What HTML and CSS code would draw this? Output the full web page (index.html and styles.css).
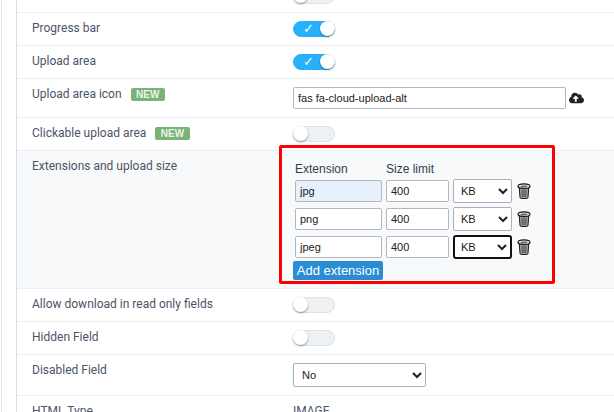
FILE: index.html
```html
<!DOCTYPE html>
<html>
  <head>
    <title>Field settings</title>
    <link rel="stylesheet" href="styles.css">
  </head>
  <body>
    <div class="page">
      <div class="rows">
        <div class="row">
          <div class="label"></div>
          <div class="toggle"></div>
        </div>
        <div class="row">
          <div class="label">Progress bar</div>
          <div class="toggle on"><span class="check">&#10003;</span></div>
        </div>
        <div class="row">
          <div class="label">Upload area</div>
          <div class="toggle on"><span class="check">&#10003;</span></div>
        </div>
        <div class="row">
          <div class="label">Upload area icon <span class="badge">NEW</span></div>
          <div class="icon-field">
            <input class="text-input icon-input" type="text" value="fas fa-cloud-upload-alt">
            <svg class="cloud" viewBox="0 0 640 512"><path d="M537.6 226.6c4.1-10.7 6.4-22.4 6.4-34.6 0-53-43-96-96-96-19.7 0-38.1 6-53.3 16.2C367 64.2 315.3 32 256 32c-88.4 0-160 71.6-160 160 0 2.7.1 5.4.2 8.1C40.2 219.8 0 273.2 0 336c0 79.5 64.5 144 144 144h368c70.7 0 128-57.3 128-128 0-61.9-44-113.6-102.4-125.4zM393.4 288H328v112c0 8.8-7.2 16-16 16h-48c-8.8 0-16-7.2-16-16V288h-65.4c-14.3 0-21.4-17.2-11.3-27.3l105.4-105.4c6.2-6.2 16.4-6.2 22.6 0l105.4 105.4c10.1 10.1 2.9 27.3-11.3 27.3z"/></svg>
          </div>
        </div>
        <div class="row">
          <div class="label">Clickable upload area <span class="badge">NEW</span></div>
          <div class="toggle"></div>
        </div>
        <div class="row row-shaded">
          <div class="label">Extensions and upload size</div>
          <div class="ext-box">
            <div class="ext-head">
              <span class="ext-col-name">Extension</span>
              <span>Size limit</span>
            </div>
            <div class="ext-row">
              <input class="text-input ext-name filled" type="text" value="jpg">
              <input class="text-input ext-size" type="text" value="400">
              <select class="ext-unit"><option>KB</option></select>
              <svg class="trash" viewBox="0 0 14 16"><use href="#trash-icon"/></svg>
            </div>
            <div class="ext-row">
              <input class="text-input ext-name" type="text" value="png">
              <input class="text-input ext-size" type="text" value="400">
              <select class="ext-unit"><option>KB</option></select>
              <svg class="trash" viewBox="0 0 14 16"><use href="#trash-icon"/></svg>
            </div>
            <div class="ext-row">
              <input class="text-input ext-name" type="text" value="jpeg">
              <input class="text-input ext-size" type="text" value="400">
              <select class="ext-unit focused"><option>KB</option></select>
              <svg class="trash" viewBox="0 0 14 16"><use href="#trash-icon"/></svg>
            </div>
            <button class="add-button" type="button">Add extension</button>
          </div>
        </div>
        <div class="row">
          <div class="label">Allow download in read only fields</div>
          <div class="toggle"></div>
        </div>
        <div class="row">
          <div class="label">Hidden Field</div>
          <div class="toggle"></div>
        </div>
        <div class="row">
          <div class="label">Disabled Field</div>
          <select class="wide-select"><option>No</option></select>
        </div>
        <div class="row">
          <div class="label">HTML Type</div>
          <div class="plain-value">IMAGE</div>
        </div>
      </div>
    </div>
    <svg class="icon-defs" width="0" height="0">
      <symbol id="trash-icon" viewBox="0 0 14 16">
        <path d="M2.2 4.5h9.6l-.8 9.9c-.1.7-.6 1.1-1.2 1.1H4.2c-.6 0-1.1-.4-1.2-1.1z" fill="#a0a0a0" stroke="#1c1c1c" stroke-width="1"/>
        <path d="M5 7l.3 7M7 7v7M9 7l-.3 7" stroke="#333" stroke-width=".8" fill="none"/>
        <ellipse cx="7" cy="3.2" rx="6" ry="2.4" fill="#e2e2e2" stroke="#1c1c1c" stroke-width="1.2"/>
        <ellipse cx="7" cy="3.4" rx="3.4" ry="1" fill="#666"/>
      </symbol>
    </svg>
  </body>
</html>
```

FILE: styles.css
```css
html, body {
  margin: 0;
  height: 100%;
  overflow: hidden;
  background: #fff;
}

body {
  font-family: Roboto, Arial, sans-serif;
  font-size: 12px;
  color: #4c5468;
}

.page {
  margin-left: 1px;
  padding-left: 14px;
  border-left: 1px solid #dfe8f3;
}

.rows {
  margin-top: -20px;
  border-left: 1px solid #d3deea;
}

.row {
  display: grid;
  grid-template-columns: 261px 1fr;
  padding: 8px 0 8px 15px;
  border-bottom: 1px solid #ebeef3;
}

.row-shaded {
  background: #f8f9fb;
}

.label {
  line-height: 14px;
}

.badge {
  display: inline-block;
  margin-left: 6px;
  padding: 0 5.5px;
  height: 13px;
  line-height: 13px;
  background: #7bb278;
  border-radius: 2px;
  color: #e8f5e6;
  font-family: "Liberation Sans", Arial, sans-serif;
  font-size: 10px;
  font-weight: bold;
}

.toggle {
  position: relative;
  box-sizing: border-box;
  width: 42px;
  height: 16px;
  background: #edf1f4;
  border: 1px solid #dde3e8;
  border-radius: 8px;
}

.toggle::after {
  content: "";
  position: absolute;
  top: -1px;
  left: -1px;
  width: 15px;
  height: 15px;
  background: #fff;
  border-radius: 50%;
  box-shadow: 0 1px 2px rgba(0, 0, 0, 0.4);
}

.toggle.on {
  background: #27b0fb;
  border-color: #27b0fb;
}

.toggle.on::after {
  left: auto;
  right: -1px;
}

.check {
  position: absolute;
  left: 9px;
  top: 0;
  line-height: 14px;
  color: #fff;
  font-family: "DejaVu Sans", sans-serif;
  font-size: 13px;
  font-weight: bold;
}

.text-input {
  box-sizing: border-box;
  height: 22px;
  padding: 0 4px;
  background: #fff;
  border: 1px solid #b0b8c4;
  border-radius: 2px;
  color: #222;
  font-family: "Liberation Sans", Arial, sans-serif;
  font-size: 11px;
}

.icon-field {
  display: flex;
  align-items: center;
  gap: 3px;
}

.icon-input {
  width: 273px;
}

.cloud {
  width: 15px;
  height: 12px;
  fill: #222;
}

.ext-box {
  box-sizing: border-box;
  width: 276px;
  height: 139px;
  margin: -14px 0 -4px -14px;
  padding: 13px 0 0 13px;
  border: 3px solid #f00;
  border-radius: 2px;
}

.ext-head {
  display: flex;
  height: 16px;
  line-height: 16px;
  margin-bottom: 3px;
  color: #333c4c;
  font-family: "Liberation Sans", Arial, sans-serif;
  font-size: 12px;
}

.ext-col-name {
  width: 91px;
}

.ext-row {
  display: flex;
  align-items: center;
  gap: 4px;
  height: 22px;
  margin-bottom: 6px;
}

.ext-name {
  width: 87px;
}

.ext-name.filled {
  background: #e8f0fe;
}

.ext-size {
  width: 63px;
}

.ext-unit {
  box-sizing: border-box;
  width: 59px;
  height: 24px;
  padding-left: 3px;
  background: #fff;
  border: 1px solid #a9b0bb;
  border-radius: 2px;
  color: #222;
  font-family: "Liberation Sans", Arial, sans-serif;
  font-size: 11px;
}

.ext-unit.focused {
  padding-left: 2px;
  border: 2px solid #111;
  border-radius: 3px;
}

.trash {
  width: 14px;
  height: 16px;
  margin-left: 1px;
}

.icon-defs {
  position: absolute;
}

.add-button {
  display: block;
  width: 90px;
  height: 19px;
  margin: -3px 0 0 -2px;
  padding: 0;
  background: #2a8dd4;
  border: none;
  border-radius: 2px;
  color: #fff;
  font-family: "Liberation Sans", Arial, sans-serif;
  font-size: 13px;
  line-height: 19px;
}

.wide-select {
  box-sizing: border-box;
  width: 133px;
  height: 24px;
  padding-left: 4px;
  background: #fff;
  border: 1px solid #a9b0bb;
  border-radius: 2px;
  color: #222;
  font-family: "Liberation Sans", Arial, sans-serif;
  font-size: 11px;
}

.plain-value {
  line-height: 14px;
}
```
